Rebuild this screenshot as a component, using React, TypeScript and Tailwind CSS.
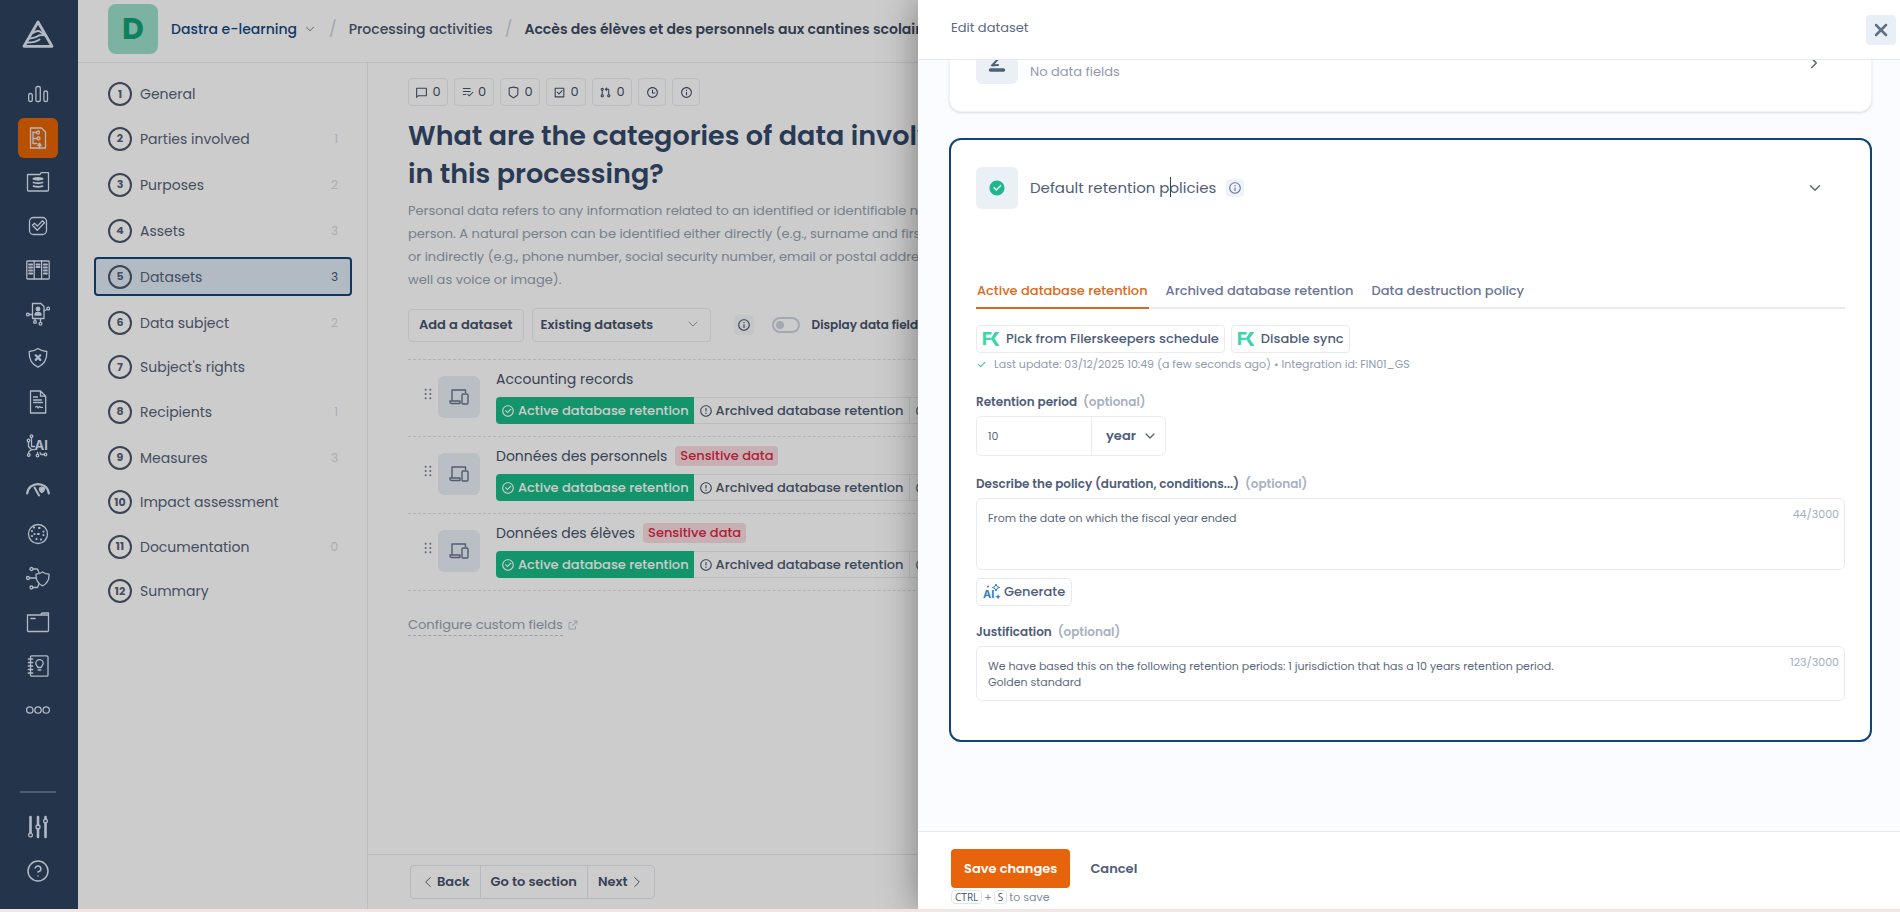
import { useState, type ReactNode } from 'react';
import {
  RiChat4Line,
  RiCheckboxCircleFill,
  RiCheckboxCircleLine,
  RiCheckboxLine,
  RiCheckLine,
  RiDraggable,
  RiErrorWarningLine,
  RiExternalLinkLine,
  RiGitPullRequestLine,
  RiInformationLine,
  RiShieldLine,
  RiTimeLine,
} from 'react-icons/ri';
import { ChevronDown, ChevronLeft, ChevronRight, CircleHelp, X } from 'lucide-react';

interface Step {
  label: string;
  count?: number;
}

interface Dataset {
  name: string;
  sensitive?: boolean;
}

const STEPS: Step[] = [
  { label: 'General' },
  { label: 'Parties involved', count: 1 },
  { label: 'Purposes', count: 2 },
  { label: 'Assets', count: 3 },
  { label: 'Datasets', count: 3 },
  { label: 'Data subject', count: 2 },
  { label: "Subject's rights" },
  { label: 'Recipients', count: 1 },
  { label: 'Measures', count: 3 },
  { label: 'Impact assessment' },
  { label: 'Documentation', count: 0 },
  { label: 'Summary' },
];

const DATASETS: Dataset[] = [
  { name: 'Accounting records' },
  { name: 'Données des personnels', sensitive: true },
  { name: 'Données des élèves', sensitive: true },
];

const TABS = ['Active database retention', 'Archived database retention', 'Data destruction policy'];

function NavSvg({ children }: { children: ReactNode }) {
  return (
    <svg viewBox="0 0 24 24" className="w-6 h-6" fill="none" stroke="currentColor" strokeWidth="1.3" strokeLinecap="round" strokeLinejoin="round">
      {children}
    </svg>
  );
}

const NAV_ITEMS: { name: string; icon: ReactNode }[] = [
  {
    name: 'Dashboard',
    icon: (
      <NavSvg>
        <rect x="2.7" y="11.5" width="3.6" height="8" rx="1.6" />
        <rect x="9.9" y="4.5" width="4.4" height="15" rx="1.6" />
        <rect x="17.9" y="9" width="3.6" height="10.5" rx="1.6" />
      </NavSvg>
    ),
  },
  {
    name: 'Processing activities',
    icon: (
      <NavSvg>
        <path d="M4.5 2h11l4 4v16h-15z" />
        <path d="M7 6v11.5h4M7 6.5h3.5M7 12.5h4" />
        <circle cx="12" cy="6.5" r="1.5" />
        <circle cx="12.5" cy="12.5" r="1.5" />
        <path d="M13.5 22v-2M11.8 19.6l1.7-2.4 1.7 2.4z" />
      </NavSvg>
    ),
  },
  {
    name: 'Data',
    icon: (
      <NavSvg>
        <path d="M1.5 4.5H14l1-1.8h7.5V20a1 1 0 0 1-1 1h-19a1 1 0 0 1-1-1z" />
        <path d="M7.5 8.7c3-1 6-1 9 0M7.5 9c3 1 6 1 9 0M7.5 12.5c3 1 6 1 9 0M7.5 16.2c3 1 6 1 9 0" strokeWidth="1.8" />
      </NavSvg>
    ),
  },
  {
    name: 'Tasks',
    icon: (
      <NavSvg>
        <rect x="3.5" y="3.5" width="17" height="17" rx="4" />
        <path d="M6.5 11.2l2-2 2.8 2.9 5.2-5.3 2 2-7.2 7.4z" />
      </NavSvg>
    ),
  },
  {
    name: 'Registers',
    icon: (
      <NavSvg>
        <rect x="0.8" y="3" width="22.4" height="18" rx="0.8" />
        <path d="M8.2 3v18M15.6 3v18" />
        <path d="M3 6.5h3.2M3 9.5h3.2M3 12.5h3.2M3 15.5h3.2M10.4 6.5h3.2M10.4 9h3.2M17.8 6.5H21M17.8 9.5H21M17.8 12.5H21M17.8 15.5H21" strokeWidth="1.8" />
      </NavSvg>
    ),
  },
  {
    name: 'Subjects',
    icon: (
      <NavSvg>
        <path d="M6.5 1.5H15l3 3v12H6.5z" />
        <circle cx="12" cy="7" r="1.8" fill="currentColor" />
        <path d="M9 13c0-3.5 6-3.5 6 0z" fill="currentColor" />
        <circle cx="1.8" cy="12.5" r="1.4" />
        <circle cx="22.2" cy="6.5" r="1.4" />
        <circle cx="9" cy="20" r="1.4" />
        <circle cx="14.5" cy="21.8" r="1.4" />
        <path d="M3.2 12.5h3.3M18 9l3-1.5M9 16.5v2M14.5 16.5v3.8" />
      </NavSvg>
    ),
  },
  {
    name: 'Incidents',
    icon: (
      <NavSvg>
        <path d="M12 2.5c2.5 1.8 5.5 2.8 8.8 3 .3 6.5-1.8 12.5-8.8 15.7-7-3.2-9.1-9.2-8.8-15.7 3.3-.2 6.3-1.2 8.8-3z" />
        <path d="M9.7 9.3l4.6 4.6M14.3 9.3l-4.6 4.6" strokeWidth="2.2" />
      </NavSvg>
    ),
  },
  {
    name: 'Contracts',
    icon: (
      <NavSvg>
        <path d="M4.5 1h10l5.2 5.2V23H4.5zM14.5 1v5.2h5.2" />
        <path d="M7.5 7h4M7.5 10h8M7.5 12.5h9M9.5 17l1.5-.8 1 1.8 1.5-1.5 1 .8h2" />
      </NavSvg>
    ),
  },
  {
    name: 'AI systems',
    icon: (
      <NavSvg>
        <circle cx="5.5" cy="2.2" r="1.3" />
        <circle cx="2.5" cy="6.5" r="1.3" />
        <circle cx="2.8" cy="21" r="1.3" />
        <circle cx="11.5" cy="21.5" r="1.3" />
        <circle cx="19.5" cy="20.5" r="1.3" />
        <path d="M5.5 3.5v9h3M2.5 8v4.5l3 3.2h3M2.8 19.7v-2l2.7-2M11.5 20v-1.5M18.2 20.5H15l-1-2" />
        <text x="8.5" y="16" fontSize="13" fontWeight="700" fontFamily="Inter, sans-serif" fill="currentColor" stroke="none">AI</text>
      </NavSvg>
    ),
  },
  {
    name: 'Risks',
    icon: (
      <NavSvg>
        <path d="M1.2 15.5C2.5 3 21.5 3 22.8 15.5" strokeWidth="2.2" />
        <path d="M8.5 9.5l4.5 8" strokeWidth="2" />
        <path d="M15.5 9l3 1c0 2.5-1 3.8-2.7 4.5-1.6-.9-2.5-2.3-2.3-4.5z" fill="currentColor" />
      </NavSvg>
    ),
  },
  {
    name: 'Cookies',
    icon: (
      <NavSvg>
        <circle cx="12" cy="12" r="9.5" />
        <path d="M8 5.5v.1M13 6h.6M17.5 9.5v.1M6 9v.1M12 12h.8M6 14v.1M17.5 13v.1M10.5 17v.1M15 17.5v.1M8.5 12v.1" strokeWidth="2.2" />
      </NavSvg>
    ),
  },
  {
    name: 'Security',
    icon: (
      <NavSvg>
        <path d="M16.5 6c1.8 1.4 4 2 6.5 2.2.3 5.3-1.5 9.2-6.5 11.6-5-2.4-6.8-6.3-6.5-11.6 2.5-.2 4.7-.8 6.5-2.2z" />
        <circle cx="5.5" cy="3" r="1.5" />
        <circle cx="2" cy="12" r="1.5" />
        <circle cx="5.5" cy="21.5" r="1.5" />
        <path d="M7 3h4.5L13 6.5M3.5 12H10M7 21.5h4.5L13 18" />
      </NavSvg>
    ),
  },
  {
    name: 'Files',
    icon: (
      <NavSvg>
        <path d="M1.5 5h13L16 3h6.5v17.5a1 1 0 0 1-1 1h-19a1 1 0 0 1-1-1zM15 5h7.5" />
        <path d="M5 8.5h4" strokeWidth="1.6" />
      </NavSvg>
    ),
  },
  {
    name: 'Knowledge base',
    icon: (
      <NavSvg>
        <rect x="4.5" y="1.8" width="17.5" height="20.4" rx="1.2" />
        <path d="M2.5 5h4M2.5 8.5h4M2.5 12h4M2.5 15.5h4M2.5 19h4" strokeWidth="1.7" />
        <path d="M11.8 13.5c0-1.5-2-2-2-4.2a3.7 3.7 0 0 1 7.4 0c0 2.2-2 2.7-2 4.2zM12.2 16h2.6" />
      </NavSvg>
    ),
  },
  {
    name: 'More',
    icon: (
      <NavSvg>
        <circle cx="3.8" cy="12" r="3.2" />
        <circle cx="12" cy="12" r="3.2" />
        <circle cx="20.2" cy="12" r="3.2" />
      </NavSvg>
    ),
  },
];

const CHIPS: { name: string; icon: ReactNode; count?: number }[] = [
  { name: 'Comments', icon: <RiChat4Line />, count: 0 },
  {
    name: 'Reviews',
    icon: (
      <svg viewBox="0 0 14 14" className="w-3 h-3" fill="none" stroke="currentColor" strokeWidth="1.2">
        <path d="M1 3h9M1 6.5h9M1 10h4M6.5 9.5l2 2L13 7" />
      </svg>
    ),
    count: 0,
  },
  { name: 'Risks', icon: <RiShieldLine />, count: 0 },
  { name: 'Tasks', icon: <RiCheckboxLine />, count: 0 },
  {
    name: 'Requests',
    icon: <RiGitPullRequestLine />,
    count: 0,
  },
  { name: 'History', icon: <RiTimeLine /> },
  { name: 'Information', icon: <RiInformationLine /> },
];

function Logo() {
  return (
    <svg viewBox="0 0 32 28" className="w-8 h-7" fill="none" stroke="currentColor" strokeWidth="2.8" strokeLinejoin="round" strokeLinecap="round">
      <path d="M16 2l14 24.3H2z" />
      <path d="M10 13c3.5-.5 4-2.5 6.5-2s2.5 2.5 5 2.5M6.5 18.8c4-.8 7-1 9.5-2.8s5-1 8-.5M5 22.5c6 .2 9-.7 12.5-3" strokeWidth="2" />
    </svg>
  );
}

function Sidebar() {
  return (
    <nav className="w-[78px] shrink-0 bg-[#2d415e] text-[#dfe8f5] flex flex-col items-center pr-0.5 pt-5 pb-[18px]">
      <Logo />
      <div className="flex flex-col gap-1 mt-[26px]">
        {NAV_ITEMS.map(({ name, icon }) => (
          <a
            key={name}
            href="#"
            aria-label={name}
            className={`w-10 h-10 rounded-md flex items-center justify-center ${name === 'Processing activities' ? 'bg-[#e66504]' : ''}`}
          >
            {icon}
          </a>
        ))}
      </div>
      <div className="mt-auto w-9 h-0.5 bg-[#61748f]" />
      <div className="flex flex-col gap-1 mt-3.5">
        <a href="#" aria-label="Settings" className="w-10 h-10 flex items-center justify-center">
          <NavSvg>
            <path d="M4.5 2v16M12 2v8M12 14v8M19.5 8v14M19.5 2v2" strokeWidth="2.6" />
            <circle cx="4.5" cy="20" r="1.9" />
            <circle cx="12" cy="12" r="2" />
            <circle cx="19.5" cy="6" r="1.9" />
          </NavSvg>
        </a>
        <a href="#" aria-label="Help" className="w-10 h-10 flex items-center justify-center">
          <CircleHelp className="w-6 h-6" strokeWidth={1.5} />
        </a>
      </div>
    </nav>
  );
}

function Header() {
  return (
    <header className="h-[63px] shrink-0 border-b border-[#eaecf0] flex items-center pl-[30px] pb-1 text-sm whitespace-nowrap overflow-hidden">
      <span className="w-[50px] h-[50px] shrink-0 rounded-lg bg-[#9cdfca] text-[#12a072] text-[30px] font-bold flex items-center justify-center">D</span>
      <a href="#" className="ml-[13px] font-medium text-[#17477f] flex items-center gap-1.5">
        Dastra e-learning
        <ChevronDown className="w-3.5 h-3.5 text-[#8a96a6]" strokeWidth={1.8} />
      </a>
      <span className="ml-3 text-base text-[#ccd2db]">/</span>
      <a href="#" className="ml-3 font-medium text-[#4a5770]">Processing activities</a>
      <span className="ml-3 text-base text-[#ccd2db]">/</span>
      <span className="ml-3 font-semibold text-[#3c4a62]">Accès des élèves et des personnels aux cantines scolaires</span>
    </header>
  );
}

function StepList() {
  return (
    <aside className="w-[290px] shrink-0 border-r border-[#eaecf0] pl-4 pr-[15px] pt-[13px]">
      <ol className="flex flex-col gap-[7px]">
        {STEPS.map(({ label, count }, i) => {
          const active = label === 'Datasets';
          return (
            <li key={label}>
              <a
                href="#"
                className={`flex items-center px-3 border-2 rounded text-[#56637a] ${count === undefined ? 'h-9' : 'h-[39px]'} ${active ? 'border-[#12467b] bg-[#dfe9f5]' : 'border-transparent'}`}
              >
                <span className="w-6 h-6 rounded-full border-2 border-[#4b5668] flex items-center justify-center text-[11px] font-bold">{i + 1}</span>
                <span className="ml-2 text-sm">{label}</span>
                {count !== undefined && (
                  <span className={`ml-auto text-xs ${active ? 'text-[#4e5b70]' : 'text-[#d5dae1]'}`}>{count}</span>
                )}
              </a>
            </li>
          );
        })}
      </ol>
    </aside>
  );
}

function DatasetRow({ name, sensitive }: Dataset) {
  return (
    <li className="flex h-[77px] border-t border-dashed border-[#dde1e7] whitespace-nowrap">
      <RiDraggable className="ml-3 mt-[26px] w-4 h-4 shrink-0 text-[#7c8696]" />
      <span className="ml-0.5 mt-4 w-[42px] h-[42px] shrink-0 rounded-md bg-[#e8eff7] flex items-center justify-center text-[#66748a]">
        <svg viewBox="0 0 20 18" className="w-5 h-[18px]" fill="none" stroke="currentColor" strokeWidth="1.4" strokeLinejoin="round">
          <path d="M3 12.5V2h13.5v3M1 13h10v2.5H2.5A1.5 1.5 0 0 1 1 14z" />
          <rect x="13" y="6" width="6" height="10" rx="1" />
        </svg>
      </span>
      <div className="ml-4 pt-[9px]">
        <div className="h-[22px] flex items-start gap-2">
          <a href="#" className="text-sm text-[#46536a]">{name}</a>
          {sensitive && (
            <span className="rounded bg-[#f9dde0] px-[5px] h-5 leading-5 text-[13px] font-medium text-[#dc2747]">Sensitive data</span>
          )}
        </div>
        <div className="mt-1.5 flex text-[13px] leading-[27px] font-medium">
          <span className="h-[27px] rounded-l bg-[#19ba86] text-white px-[5px] flex items-center gap-[3px]">
            <RiCheckboxCircleLine className="w-[14px] h-[14px]" />
            Active database retention
          </span>
          {['Archived database retention', 'Data destruction policy'].map(tag => (
            <span key={tag} className="h-[27px] border border-l-0 border-[#e9ecf1] text-[#4e5b72] px-[5px] flex items-center gap-[3px]">
              <RiErrorWarningLine className="w-[14px] h-[14px]" />
              {tag}
            </span>
          ))}
        </div>
      </div>
    </li>
  );
}

function MainContent() {
  return (
    <main className="flex-1 min-w-0 flex flex-col overflow-hidden">
      <div className="flex-1 pl-10 pt-[15px]">
        <div className="flex gap-1.5">
          {CHIPS.map(({ name, icon, count }) => (
            <button
              key={name}
              aria-label={name}
              className={`h-7 border border-[#e9ecf1] rounded flex items-center justify-center gap-1 text-[13px] text-[#46536a] ${count === undefined ? 'w-7' : 'w-10'}`}
            >
              {icon}
              {count}
            </button>
          ))}
        </div>

        <h1 className="mt-[11px] text-[27px] leading-[38px] font-semibold text-[#34496a] whitespace-nowrap">
          What are the categories of data involved
          <br />
          in this processing?
        </h1>
        <p className="mt-1.5 text-[13px] leading-[23px] text-[#95a1b1] whitespace-nowrap">
          Personal data refers to any information related to an identified or identifiable natural
          <br />
          person. A natural person can be identified either directly (e.g., surname and first name)
          <br />
          or indirectly (e.g., phone number, social security number, email or postal address, as
          <br />
          well as voice or image).
        </p>

        <div className="mt-[17px] flex items-center whitespace-nowrap">
          <button className="h-[33px] px-2.5 border border-[#e9ecf1] rounded text-[13px] font-semibold text-[#46536a]">Add a dataset</button>
          <div className="relative ml-2">
            <select aria-label="Existing datasets" className="appearance-none w-[179px] h-[34px] pl-2 pr-8 border border-[#e9ecf1] rounded text-[13px] font-semibold text-[#46536a]">
              <option>Existing datasets</option>
            </select>
            <ChevronDown className="absolute right-2.5 top-2 w-4 h-4 text-[#95a1b1] pointer-events-none" strokeWidth={1.5} />
          </div>
          <span className="ml-[23px] w-5 h-5 rounded bg-[#f5f7fa] flex items-center justify-center text-[#46536a]">
            <RiInformationLine className="w-3.5 h-3.5" />
          </span>
          <input
            id="display-fields"
            type="checkbox"
            role="switch"
            className="appearance-none ml-[18px] w-7 h-4 rounded-full border-2 border-[#cdd4de] before:block before:w-2 before:h-2 before:m-0.5 before:rounded-full before:bg-[#cdd4de]"
          />
          <label htmlFor="display-fields" className="ml-3 text-xs font-semibold text-[#46536a]">Display data fields</label>
        </div>

        <ul className="mt-[17px] border-b border-dashed border-[#dde1e7]">
          {DATASETS.map(d => (
            <DatasetRow key={d.name} {...d} />
          ))}
        </ul>

        <a href="#" className="mt-6 inline-flex items-center gap-1 text-[13px] text-[#95a1b1]">
          <span className="border-b border-dashed border-[#c3cad4]">Configure custom fields</span>
          <RiExternalLinkLine className="w-3 h-3 text-[#c3cad4]" />
        </a>
      </div>

      <footer className="h-[55px] shrink-0 border-t border-[#e6e8ec] flex items-center pl-[42px]">
        <div className="flex border border-[#e3e6ec] rounded divide-x divide-[#e3e6ec] text-[13px] font-semibold text-[#46536a]">
          <button className="h-8 pl-2 pr-2.5 flex items-center">
            <ChevronLeft className="w-[18px] h-[18px]" strokeWidth={1.2} />
            Back
          </button>
          <button className="h-8 px-2.5">Go to section</button>
          <button className="h-8 pl-2.5 pr-2 flex items-center">
            Next
            <ChevronRight className="w-[18px] h-[18px]" strokeWidth={1.2} />
          </button>
        </div>
      </footer>
    </main>
  );
}

function FkMark() {
  return (
    <svg viewBox="0 0 18 16" className="w-[18px] h-4 overflow-visible" fill="#3ed6a8">
      <text x="0" y="14" fontSize="17" fontWeight="800" fontFamily="Inter, sans-serif">F</text>
      <path d="M13 1h4.5l-5 6.5 5 7.5h-4L8.8 7.5z" />
    </svg>
  );
}

function FieldLabel({ htmlFor, children }: { htmlFor: string; children: ReactNode }) {
  return (
    <label htmlFor={htmlFor} className="block text-xs leading-5 font-semibold text-[#4f5d78]">
      {children}
      <span className="ml-1.5 text-[#a6b1c2]">(optional)</span>
    </label>
  );
}

function TextArea({ id, initial, className }: { id: string; initial: string; className: string }) {
  const [value, setValue] = useState(initial);
  return (
    <div className="relative mt-1">
      <textarea
        id={id}
        value={value}
        onChange={e => setValue(e.target.value)}
        className={`block w-full resize-none rounded-md border border-[#e8ecf1] pl-[11px] pr-20 py-[11px] text-[11px] leading-4 text-[#5a677c] outline-none ${className}`}
      />
      <span className="absolute right-1.5 top-2 text-[11px] leading-4 text-[#a0aec2]">{value.length}/3000</span>
    </div>
  );
}

function RetentionCard() {
  const [tab, setTab] = useState(TABS[0]);
  return (
    <section className="mt-[26px] rounded-xl border-2 border-[#0d447b] bg-white px-[25px] pt-[27px] pb-[39px]">
      <div className="flex items-center">
        <span className="w-[42px] h-[42px] rounded-md bg-[#ebf0f6] flex items-center justify-center">
          <RiCheckboxCircleFill className="w-[18px] h-[18px] text-[#1fb88a]" />
        </span>
        <h2 className="relative ml-3 text-[15px] text-[#4f5d78]">
          Default retention policies
          <span className="absolute left-[140px] top-0 w-px h-5 bg-[#333f55]" />
        </h2>
        <span className="ml-2.5 w-[18px] h-[18px] rounded bg-[#f0f2fa] flex items-center justify-center text-[#6c7a99]">
          <RiInformationLine className="w-3.5 h-3.5" />
        </span>
        <button aria-label="Collapse" className="ml-auto mr-[21px] text-[#5a677c]">
          <ChevronDown className="w-[18px] h-[18px]" strokeWidth={2} />
        </button>
      </div>

      <div role="tablist" className="mt-[66px] flex gap-4 border-b-2 border-[#e9ebf0] text-[13px] font-medium">
        {TABS.map(t => (
          <button
            key={t}
            role="tab"
            aria-selected={t === tab}
            onClick={() => setTab(t)}
            className={`h-[34px] px-px -mb-0.5 border-b-2 ${t === tab ? 'border-[#d2691e] text-[#dc6a1a]' : 'border-transparent text-[#6b7694]'}`}
          >
            {t}
          </button>
        ))}
      </div>

      <div className="mt-4 flex gap-1.5 text-[13px] font-medium text-[#4f5d78]">
        {['Pick from Filerskeepers schedule', 'Disable sync'].map(action => (
          <button key={action} className="h-7 px-[5px] border border-[#e8ebf2] rounded flex items-center gap-1.5">
            <FkMark />
            {action}
          </button>
        ))}
      </div>
      <p className="mt-0.5 flex items-center gap-[7px] text-[11px] leading-[18px] text-[#8f9db2]">
        <RiCheckLine className="w-[11px] h-[11px] text-[#1fb88a]" />
        Last update: 03/12/2025 10:49 (a few seconds ago) • Integration id: FIN01_GS
      </p>

      <div className="mt-[19px]">
        <FieldLabel htmlFor="period">Retention period</FieldLabel>
        <div className="mt-1 flex">
          <input id="period" defaultValue="10" className="w-[116px] h-10 pl-[11px] rounded-l-md border border-[#e8ecf1] text-[11px] text-[#5a677c] outline-none" />
          <div className="relative">
            <select aria-label="Unit" defaultValue="year" className="appearance-none w-[74px] h-10 pl-3.5 rounded-r-md border border-l-0 border-[#e8ecf1] text-[13px] font-semibold text-[#4f5d78] outline-none">
              <option>year</option>
            </select>
            <ChevronDown className="absolute right-2 top-3 w-4 h-4 text-[#4f5d78] pointer-events-none" strokeWidth={1.8} />
          </div>
        </div>
      </div>

      <div className="mt-[18px]">
        <FieldLabel htmlFor="policy">Describe the policy (duration, conditions...)</FieldLabel>
        <TextArea id="policy" initial="From the date on which the fiscal year ended" className="h-[72px]" />
        <button className="mt-2 h-7 px-1.5 border border-[#e8ebf2] rounded flex items-center gap-[3px] text-[13px] font-medium text-[#4f5d78]">
          <svg viewBox="0 0 18 18" className="w-[18px] h-[18px]" fill="#2b7fc4">
            <text x="0" y="15" fontSize="11" fontWeight="700" fontFamily="Inter, sans-serif">AI</text>
            <path d="M13 1l1 2.5 2.5 1-2.5 1L13 8l-1-2.5-2.5-1 2.5-1z" fill="none" stroke="#2b7fc4" />
            <path d="M15 11l.8 2 2 .8-2 .8-.8 2-.8-2-2-.8 2-.8z" />
            <circle cx="5" cy="3.5" r="1" fill="#7d5aa8" />
          </svg>
          Generate
        </button>
      </div>

      <div className="mt-4">
        <FieldLabel htmlFor="justification">Justification</FieldLabel>
        <TextArea
          id="justification"
          initial={'We have based this on the following retention periods: 1 jurisdiction that has a 10 years retention period.\nGolden standard'}
          className="h-[55px]"
        />
      </div>
    </section>
  );
}

function Drawer() {
  return (
    <div role="dialog" aria-label="Edit dataset" className="absolute inset-y-0 right-0 w-[982px] max-w-full bg-white flex flex-col shadow-[0_0_36px_rgba(0,0,0,0.4)]">
      <div className="h-[60px] shrink-0 border-b border-[#e6e9ef] flex items-center justify-between pl-[33px] pr-1">
        <span className="pb-1 text-[13px] text-[#5b6880]">Edit dataset</span>
        <button aria-label="Close" className="w-[30px] h-[30px] rounded bg-[#e9eff6] flex items-center justify-center text-[#5f6f84]">
          <X className="w-5 h-5" strokeWidth={3} />
        </button>
      </div>

      <div className="flex-1 min-h-0 overflow-hidden bg-[#fafcff] pl-[31px] pr-7">
        <section className="-mt-12 h-[100px] rounded-xl border border-[#f1f3f6] bg-white shadow-sm flex items-end px-[26px] pb-[27px]">
          <span className="w-[42px] h-[42px] rounded-md bg-[#ebf0f6] flex items-center justify-center text-[#4f6078]">
            <svg viewBox="0 0 18 18" className="w-[18px] h-[18px]" fill="none" stroke="currentColor" strokeLinecap="round">
              <path d="M2.5 16h13" strokeWidth="3.5" />
              <path d="M4 11.5L13 2M4 11.5l6-.5" strokeWidth="2" />
            </svg>
          </span>
          <span className="ml-3 pb-[3px] text-[13px] text-[#8f9aac]">No data fields</span>
          <button aria-label="Expand" className="ml-auto mr-[22px] mb-3 text-[#5a677c]">
            <ChevronRight className="w-[18px] h-[18px]" strokeWidth={2} />
          </button>
        </section>
        <RetentionCard />
      </div>

      <div className="h-[78px] shrink-0 border-t border-[#e6e9ef] pl-[33px] pt-[17px]">
        <div className="flex items-center text-[13px] font-semibold">
          <button className="h-[39px] px-[13px] rounded bg-[#e8640c] text-white">Save changes</button>
          <button className="ml-5 text-[#4f5d78]">Cancel</button>
        </div>
        <p className="mt-px flex items-center gap-0.5 text-[11px] leading-4 text-[#7f8ca3]">
          <kbd className="border border-[#dfe4ec] rounded-sm px-[3px] font-sans text-[10px] leading-3 text-[#4f5d78]">CTRL</kbd>
          +
          <kbd className="border border-[#dfe4ec] rounded-sm px-[3px] font-sans text-[10px] leading-3 text-[#4f5d78]">S</kbd>
          to save
        </p>
      </div>
    </div>
  );
}

export default function App() {
  return (
    <div className="h-screen flex flex-col bg-[#efe6e5] font-['Poppins','Inter',sans-serif]">
      <div className="relative flex-1 min-h-0 mb-[3px] flex overflow-hidden bg-white">
        <Sidebar />
        <div className="flex-1 min-w-0 flex flex-col">
          <Header />
          <div className="flex-1 min-h-0 flex">
            <StepList />
            <MainContent />
          </div>
        </div>
        <div className="absolute inset-0 bg-black/20" />
        <Drawer />
      </div>
    </div>
  );
}
